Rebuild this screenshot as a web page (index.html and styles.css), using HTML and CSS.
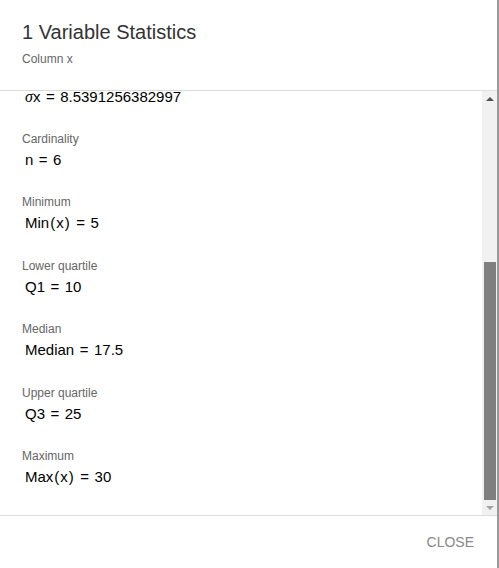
FILE: index.html
```html
<!DOCTYPE html>
<html lang="en">
<head>
<meta charset="utf-8">
<title>1 Variable Statistics</title>
<link rel="stylesheet" href="styles.css">
</head>
<body>
<div class="page">
  <div class="dialog">
    <header class="header">
      <h1 class="title">1 Variable Statistics</h1>
      <div class="subtitle">Column x</div>
    </header>
    <div class="body">
      <div class="scroll">
        <div class="list">
          <div class="item">
            <div class="value value-top"><i>σ</i>x<span class="eq">=</span>8.5391256382997</div>
          </div>
          <div class="item">
            <div class="label">Cardinality</div>
            <div class="value">n<span class="eq">=</span>6</div>
          </div>
          <div class="item">
            <div class="label">Minimum</div>
            <div class="value">Min<span class="p">(</span>x<span class="p">)</span><span class="eq">=</span>5</div>
          </div>
          <div class="item">
            <div class="label">Lower quartile</div>
            <div class="value">Q1<span class="eq">=</span>10</div>
          </div>
          <div class="item">
            <div class="label">Median</div>
            <div class="value">Median<span class="eq">=</span>17.5</div>
          </div>
          <div class="item">
            <div class="label">Upper quartile</div>
            <div class="value">Q3<span class="eq">=</span>25</div>
          </div>
          <div class="item">
            <div class="label">Maximum</div>
            <div class="value">Max<span class="p">(</span>x<span class="p">)</span><span class="eq">=</span>30</div>
          </div>
        </div>
      </div>
      <div class="scrollbar">
        <div class="sb-btn"><span class="arrow-up"></span></div>
        <div class="sb-track"><div class="sb-thumb"></div></div>
        <div class="sb-btn"><span class="arrow-down"></span></div>
      </div>
    </div>
    <footer class="footer">
      <span class="close">CLOSE</span>
    </footer>
  </div>
  <div class="edge"></div>
</div>
</body>
</html>
```

FILE: styles.css
```css
html, body {
  margin: 0;
  padding: 0;
  background: #ffffff;
}
body {
  font-family: "Liberation Sans", Arial, sans-serif;
}
.page {
  display: flex;
  width: 499px;
  height: 568px;
  overflow: hidden;
}
.dialog {
  width: 497px;
  height: 568px;
  display: flex;
  flex-direction: column;
  background: #ffffff;
}
.edge {
  width: 2px;
  height: 568px;
  background: #9a9a9a;
}
.header {
  padding: 20px 22px 23px 22px;
  border-bottom: 1px solid #dcdcdc;
}
.title {
  margin: 0;
  font-size: 20px;
  line-height: 24px;
  font-weight: normal;
  color: #333333;
}
.subtitle {
  margin-top: 7px;
  font-size: 12px;
  line-height: 16px;
  color: #666666;
}
.body {
  flex: 1;
  display: flex;
  min-height: 0;
}
.scroll {
  flex: 1;
  overflow: visible;
  display: flex;
  flex-direction: column;
  justify-content: flex-end;
}
.list {
  padding: 0 22px 28px 22px;
}
.item + .item {
  margin-top: 24.4px;
}
.label {
  font-size: 12px;
  line-height: 16px;
  color: #666666;
  margin-bottom: 3px;
}
.value {
  padding-left: 3px;
  font-size: 15px;
  line-height: 20px;
  color: #000000;
}
.value-top {
  line-height: 11px;
  padding-bottom: 4.5px;
}
.value i {
  font-family: "Liberation Serif", "Times New Roman", serif;
  font-size: 16px;
}
.eq {
  margin: 0 5.5px;
}
.p {
  margin: 0 1px;
}
.scrollbar {
  width: 15px;
  display: flex;
  flex-direction: column;
  background: #f1f1f1;
}
.sb-btn {
  height: 15px;
  display: flex;
  align-items: center;
  justify-content: center;
}
.arrow-up {
  width: 0;
  height: 0;
  border-left: 4px solid transparent;
  border-right: 4px solid transparent;
  border-bottom: 4px solid #505050;
}
.arrow-down {
  width: 0;
  height: 0;
  border-left: 4px solid transparent;
  border-right: 4px solid transparent;
  border-top: 4px solid #a3a3a3;
}
.sb-track {
  flex: 1;
  display: flex;
  flex-direction: column;
  justify-content: flex-end;
}
.sb-thumb {
  height: 238px;
  margin: 0 1px 0 2px;
  background: #7f7f7f;
}
.footer {
  height: 52px;
  border-top: 1px solid #dcdcdc;
  display: flex;
  align-items: center;
  justify-content: flex-end;
  padding-right: 23px;
}
.close {
  font-size: 14px;
  line-height: 16px;
  color: #888888;
}
```
